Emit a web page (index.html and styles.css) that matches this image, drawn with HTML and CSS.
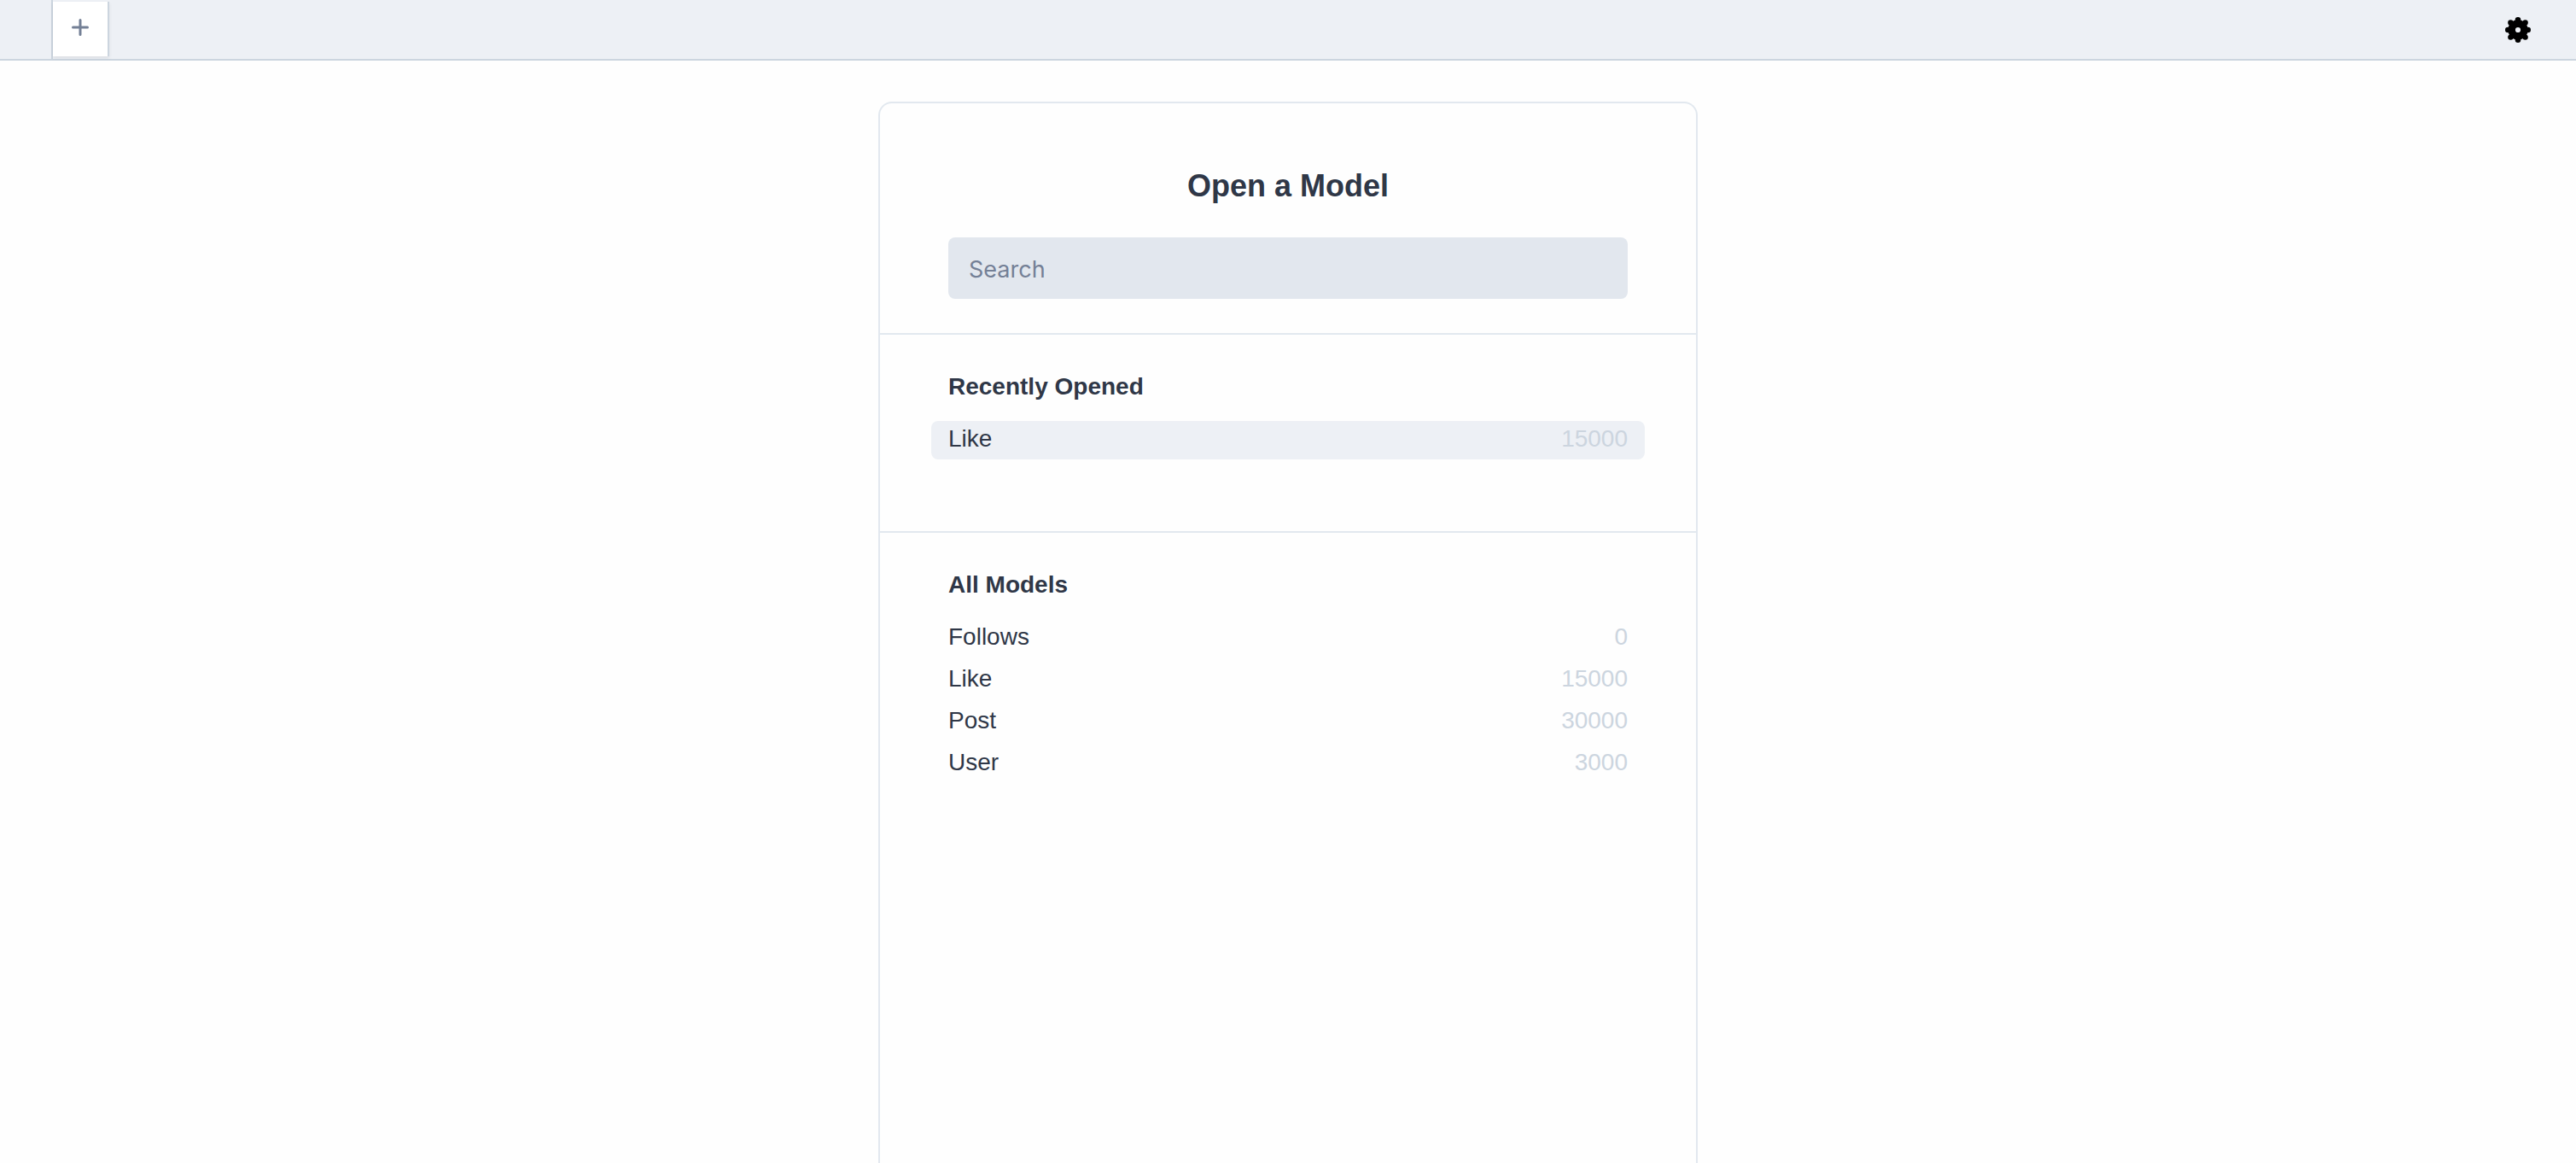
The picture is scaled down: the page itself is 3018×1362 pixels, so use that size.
FILE: index.html
```html
<!DOCTYPE html>
<html lang="en">
<head>
  <meta charset="utf-8">
  <meta name="viewport" content="width=device-width, initial-scale=1">
  <title>Open a Model</title>
  <link rel="stylesheet" href="styles.css">
</head>
<body>
  <header class="topbar">
    <nav class="tabs" aria-label="Tabs">
      <button class="tab" type="button" aria-label="New tab">
        <svg class="icon-plus" viewBox="0 0 20 20" aria-hidden="true">
          <path d="M10 1.5v17M1.5 10h17"/>
        </svg>
      </button>
    </nav>
    <button class="settings" type="button" aria-label="Settings">
      <svg class="icon-gear" viewBox="-15 -15 30 30" aria-hidden="true">
        <path fill-rule="evenodd" d="M0-11.7A11.7 11.7 0 0 1 0 11.7A11.7 11.7 0 0 1 0-11.7ZM0-3.1A3.1 3.1 0 0 0 0 3.1A3.1 3.1 0 0 0 0-3.1Z"/>
        <circle cx="0" cy="-11.7" r="3.3"/>
        <circle cx="8.6" cy="-8.6" r="3.2"/>
        <circle cx="11.7" cy="0" r="3.3"/>
        <circle cx="8.6" cy="8.6" r="3.2"/>
        <circle cx="0" cy="11.7" r="3.3"/>
        <circle cx="-8.6" cy="8.6" r="3.2"/>
        <circle cx="-11.7" cy="0" r="3.3"/>
        <circle cx="-8.6" cy="-8.6" r="3.2"/>
      </svg>
    </button>
  </header>

  <main class="page">
    <div class="card">
      <div class="card-head">
        <h1 class="title">Open a Model</h1>
        <input class="search" type="search" placeholder="Search" aria-label="Search models">
      </div>

      <section class="group">
        <h2 class="group-title">Recently Opened</h2>
        <ul class="models">
          <li><button class="model is-active" type="button"><span>Like</span><span class="count">15000</span></button></li>
        </ul>
      </section>

      <section class="group">
        <h2 class="group-title">All Models</h2>
        <ul class="models">
          <li><button class="model" type="button"><span>Follows</span><span class="count">0</span></button></li>
          <li><button class="model" type="button"><span>Like</span><span class="count">15000</span></button></li>
          <li><button class="model" type="button"><span>Post</span><span class="count">30000</span></button></li>
          <li><button class="model" type="button"><span>User</span><span class="count">3000</span></button></li>
        </ul>
      </section>
    </div>
  </main>
</body>
</html>
```

FILE: styles.css
```css
*,
*::before,
*::after {
  box-sizing: border-box;
}

body {
  margin: 0;
  min-height: 100vh;
  display: flex;
  flex-direction: column;
  background: #fefefe;
  color: #2f3747;
  font-family: Helvetica, "Liberation Sans", Arial, sans-serif;
  font-size: 28px;
  line-height: 41px;
}

button {
  margin: 0;
  padding: 0;
  border: 0;
  background: none;
  color: inherit;
  font: inherit;
  cursor: pointer;
}

/* Top bar */
.topbar {
  display: flex;
  justify-content: space-between;
  padding: 0 53px 0 60px;
  background: #edf0f5;
  border-bottom: 2px solid #ccd5df;
}

.tabs {
  display: flex;
  padding: 2px 0 3px;
  border-left: 2px solid #ccd5df;
}

.tab {
  display: flex;
  align-items: center;
  justify-content: center;
  width: 66px;
  height: 64px;
  padding-bottom: 4px;
  border-right: 2px solid #ccd5df;
  background: #fff;
  box-shadow: 0 2px 4px rgba(0, 0, 0, 0.08);
}

.icon-plus {
  width: 20px;
  height: 20px;
  fill: none;
  stroke: #748096;
  stroke-width: 3;
  stroke-linecap: round;
}

.settings {
  display: flex;
  align-items: center;
}

.icon-gear {
  width: 30px;
  height: 30px;
  fill: #000;
}

/* Model picker */
.page {
  flex: 1;
  display: flex;
  justify-content: center;
  padding-top: 48px;
}

.card {
  width: 100%;
  max-width: 960px;
  border: 2px solid #e2e8ef;
  border-bottom: 0;
  border-radius: 16px 16px 0 0;
}

.card-head {
  padding: 74px 80px 40px;
}

.title {
  margin: 0 0 38px;
  font-size: 36px;
  line-height: 45px;
  text-align: center;
}

.search {
  display: block;
  width: 100%;
  height: 72px;
  padding: 2px 24px 0;
  border: 0;
  border-radius: 8px;
  appearance: none;
  background: #e2e7ee;
  color: inherit;
  font-family: Inter, sans-serif;
  font-size: 27px;
}

.search::placeholder {
  color: #748096;
  opacity: 1;
}

.group {
  padding: 40px 60px 80px;
  border-top: 2px solid #e2e8ef;
}

.group-title {
  margin: 0 20px 20px;
  font-size: 28px;
}

.models {
  margin: 0;
  padding: 0;
  list-style: none;
}

.model {
  display: flex;
  justify-content: space-between;
  width: 100%;
  margin-bottom: 4px;
  padding: 0 20px 4px;
  border-radius: 8px;
}

.model.is-active,
.model:hover {
  background: #edf0f5;
}

.count {
  color: #ccd5df;
}
```
